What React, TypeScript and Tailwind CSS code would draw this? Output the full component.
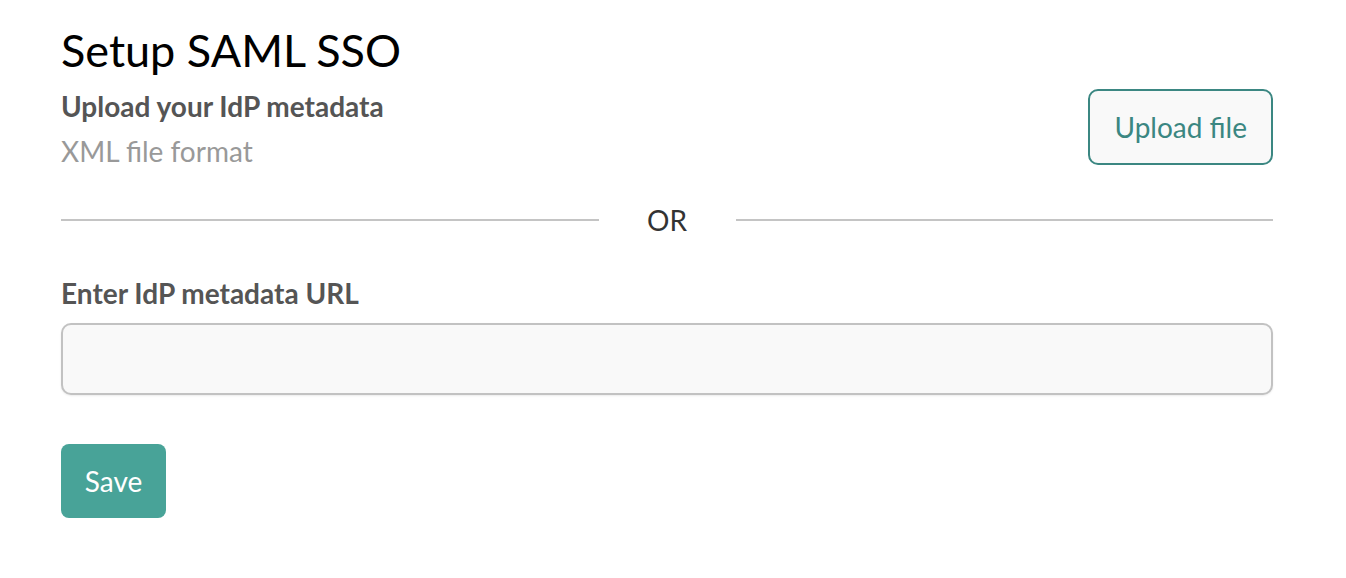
export default function App() {
  return (
    <div className="min-h-screen bg-white font-['Lato',sans-serif]">
      <div className="px-[61px] pt-[24px] w-[1334px]">
        <h1 className="text-[45px] leading-[52px] text-black">Setup SAML SSO</h1>

        <div className="flex items-start justify-between mt-[12px]">
          <div>
            <p className="text-[28px] leading-[36px] font-bold text-[#555]">Upload your IdP metadata</p>
            <p className="text-[28px] leading-[36px] text-[#999] mt-[9px]">XML file format</p>
          </div>
          <button className="mt-[1px] h-[76px] px-[24px] rounded-[10px] border-2 border-[#3b8782] bg-[#f9f9f9] text-[28px] text-[#3b8782]">
            Upload file
          </button>
        </div>

        <div className="flex items-center mt-[33px]">
          <div className="flex-1 h-[2px] bg-[#c4c4c4]" />
          <span className="w-[137px] text-center text-[28px] leading-[36px] text-[#333]">OR</span>
          <div className="flex-1 h-[2px] bg-[#c4c4c4]" />
        </div>

        <p className="mt-[37px] text-[28px] leading-[36px] font-bold text-[#555]">Enter IdP metadata URL</p>

        <input
          type="text"
          className="block mt-[12px] w-full h-[72px] rounded-[10px] border-2 border-[#c2c2c2] bg-[#f9f9f9] px-4 text-[28px] outline-none shadow-[0_1px_2px_rgba(0,0,0,0.08)]"
        />

        <button className="mt-[49px] h-[74px] w-[105px] rounded-[8px] bg-[#48a398] text-[28px] text-white">
          Save
        </button>
      </div>
    </div>
  )
}
